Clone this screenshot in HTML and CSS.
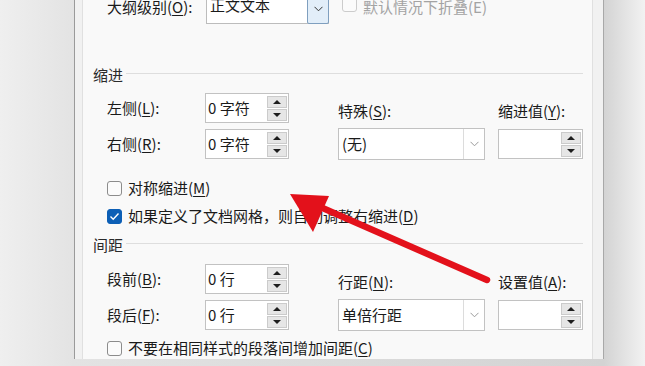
FILE: index.html
```html
<!DOCTYPE html>
<html lang="zh-CN">
<head>
    <meta charset="UTF-8">
    <title>段落</title>
    <link rel="stylesheet" href="styles.css">
</head>
<body>
    <div class="dialog">
        <div class="panel">
            <div class="row-top">
                <span class="label">大纲级别(<u>O</u>):</span>
                <div class="select select-top">
                    <span class="select-val">正文文本</span>
                    <span class="select-btn"><svg width="9" height="6" viewBox="0 0 9 6"><path d="M0.5 0.8 L4.5 4.8 L8.5 0.8" fill="none" stroke="#333" stroke-width="1"/></svg></span>
                </div>
                <span class="box box-disabled"></span>
                <span class="muted">默认情况下折叠(E)</span>
            </div>

            <div class="group-title">缩进</div>
            <div class="fields">
                <span class="label">左侧(<u>L</u>):</span>
                <div class="spin">
                    <span class="spin-val">0 字符</span>
                    <span class="spin-btns"><span class="up"></span><span class="down"></span></span>
                </div>
                <span class="label label-top">特殊(<u>S</u>):</span>
                <span class="label label-top">缩进值(<u>Y</u>):</span>

                <span class="label">右侧(<u>R</u>):</span>
                <div class="spin">
                    <span class="spin-val">0 字符</span>
                    <span class="spin-btns"><span class="up"></span><span class="down"></span></span>
                </div>
                <div class="select">
                    <span class="select-val">(无)</span>
                    <span class="select-btn"><svg width="9" height="6" viewBox="0 0 9 6"><path d="M0.5 0.8 L4.5 4.8 L8.5 0.8" fill="none" stroke="#9a9a9a" stroke-width="1"/></svg></span>
                </div>
                <div class="spin spin-wide">
                    <span class="spin-val"></span>
                    <span class="spin-btns"><span class="up"></span><span class="down"></span></span>
                </div>
            </div>
            <div class="check check-first"><span class="box"></span>对称缩进(<u>M</u>)</div>
            <div class="check"><span class="box box-on"><svg width="11" height="9" viewBox="0 0 11 9"><path d="M1.5 4.6 L4.2 7.2 L9.5 1.6" fill="none" stroke="#fff" stroke-width="1.4"/></svg></span>如果定义了文档网格，则自动调整右缩进(<u>D</u>)</div>

            <div class="group-title group-spacing">间距</div>
            <div class="fields fields-spacing">
                <span class="label">段前(<u>B</u>):</span>
                <div class="spin">
                    <span class="spin-val">0 行</span>
                    <span class="spin-btns"><span class="up"></span><span class="down"></span></span>
                </div>
                <span class="label label-top">行距(<u>N</u>):</span>
                <span class="label label-top">设置值(<u>A</u>):</span>

                <span class="label">段后(<u>F</u>):</span>
                <div class="spin">
                    <span class="spin-val">0 行</span>
                    <span class="spin-btns"><span class="up"></span><span class="down"></span></span>
                </div>
                <div class="select">
                    <span class="select-val">单倍行距</span>
                    <span class="select-btn"><svg width="9" height="6" viewBox="0 0 9 6"><path d="M0.5 0.8 L4.5 4.8 L8.5 0.8" fill="none" stroke="#9a9a9a" stroke-width="1"/></svg></span>
                </div>
                <div class="spin spin-wide">
                    <span class="spin-val"></span>
                    <span class="spin-btns"><span class="up"></span><span class="down"></span></span>
                </div>
            </div>
            <div class="check"><span class="box"></span>不要在相同样式的段落间增加间距(<u>C</u>)</div>
        </div>
    </div>

    <!-- annotation arrow drawn over the screenshot -->
    <svg class="arrow" width="645" height="366" viewBox="0 0 645 366">
        <line x1="487" y1="280" x2="318" y2="206" stroke="#e3111b" stroke-width="6.5" stroke-linecap="round"/>
        <polygon points="290,194 329,196 313,232" fill="#e3111b"/>
    </svg>
</body>
</html>
```

FILE: styles.css
```css
* {
    box-sizing: border-box;
}
body {
    margin: 0;
    height: 366px;
    overflow: hidden;
    position: relative;
    font-family: "Noto Sans CJK SC", "Microsoft YaHei", sans-serif;
    font-size: 15px;
    color: #1a1a1a;
    background: linear-gradient(90deg, #efefef 0, #e3e3e3 74px, #d3d3d3 604px, #f2f2f2 645px);
}
u {
    text-underline-offset: 2px;
}
.dialog {
    margin-left: 74px;
    width: 530px;
    height: 366px;
    border-left: 1px solid #9a9a9a;
    border-right: 1px solid #a8a8a8;
    background: #f1f1f1;
    padding: 0 10px 0 7px;
}
.panel {
    height: 100%;
    background: #f9f9f9;
    border-left: 1px solid #e0e0e0;
    border-right: 1px solid #e0e0e0;
    padding: 0 9px 0 10px;
}
.label {
    line-height: 20px;
    white-space: nowrap;
}
.row-top {
    display: flex;
    align-items: center;
    margin-top: -7px;
    padding-left: 14px;
    height: 31px;
}
.row-top .label {
    width: 99px;
    margin-top: -4px;
}
.muted {
    color: #a3a3a3;
    line-height: 20px;
    margin-top: -4px;
}

/* group headings with rule */
.group-title {
    display: flex;
    align-items: center;
    line-height: 20px;
    margin-top: 41px;
    color: #2a2a2a;
}
.group-title::after {
    content: "";
    flex: 1;
    height: 1px;
    background: #dedede;
    margin-left: 3px;
    transform: translateY(-2px);
}
.group-spacing {
    margin-top: 9px;
}

.fields {
    display: grid;
    grid-template-columns: 98px 133px 160px 85px;
    grid-template-rows: 30px 30px;
    row-gap: 6px;
    align-items: center;
    margin: 8px 0 0 14px;
}
.fields-spacing {
    margin-top: 9px;
}
.label-top {
    padding-top: 6px;
}

/* spinner */
.spin {
    width: 84px;
    height: 30px;
    display: flex;
    align-items: center;
    background: #fff;
    border: 1px solid #c2c2c2;
    padding: 0 1px 0 2px;
}
.spin-wide {
    width: 85px;
}
.spin-val {
    flex: 1;
    line-height: 20px;
    white-space: nowrap;
}
.spin-btns {
    display: flex;
    flex-direction: column;
    gap: 1px;
}
.spin-btns span {
    width: 20px;
    height: 12px;
    background: #e6e6e6;
    border: 1px solid #cbcbcb;
    display: flex;
    align-items: center;
    justify-content: center;
}
.spin-btns .up::before,
.spin-btns .down::before {
    content: "";
    border-left: 4px solid transparent;
    border-right: 4px solid transparent;
}
.spin-btns .up::before {
    border-bottom: 4px solid #1e1e1e;
}
.spin-btns .down::before {
    border-top: 4px solid #1e1e1e;
}

/* dropdown */
.select {
    width: 147px;
    height: 32px;
    display: flex;
    background: #fff;
    border: 1px solid #c2c2c2;
}
.select-val {
    flex: 1;
    padding-left: 3px;
    line-height: 30px;
    white-space: nowrap;
}
.select-btn {
    width: 21px;
    border-left: 1px solid #dcdcdc;
    display: flex;
    align-items: center;
    justify-content: center;
}
.select-top {
    width: 123px;
    height: 31px;
    border-color: #bcbcbc;
}
.select-top .select-val {
    line-height: 22px;
}
.select-top .select-btn {
    width: 22px;
    background: #e2eef9;
    border: 1px solid #7f9fbf;
    margin: -1px -1px -1px 0;
    border-radius: 2px;
}

/* checkboxes */
.check {
    display: flex;
    align-items: center;
    line-height: 20px;
    margin: 8px 0 0 14px;
    white-space: nowrap;
}
.check-first {
    margin-top: 19px;
}
.box {
    width: 15px;
    height: 15px;
    border: 1px solid #8c8c8c;
    border-radius: 3px;
    background: #fbfbfb;
    margin-right: 6px;
    display: flex;
    align-items: center;
    justify-content: center;
    flex: none;
}
.box-on {
    background: #0c5fb6;
    border-color: #0c5fb6;
}
.box-disabled {
    border-color: #cccccc;
    margin-left: 13px;
    margin-top: -8px;
}

.arrow {
    position: absolute;
    top: 0;
    left: 0;
    pointer-events: none;
}
```
